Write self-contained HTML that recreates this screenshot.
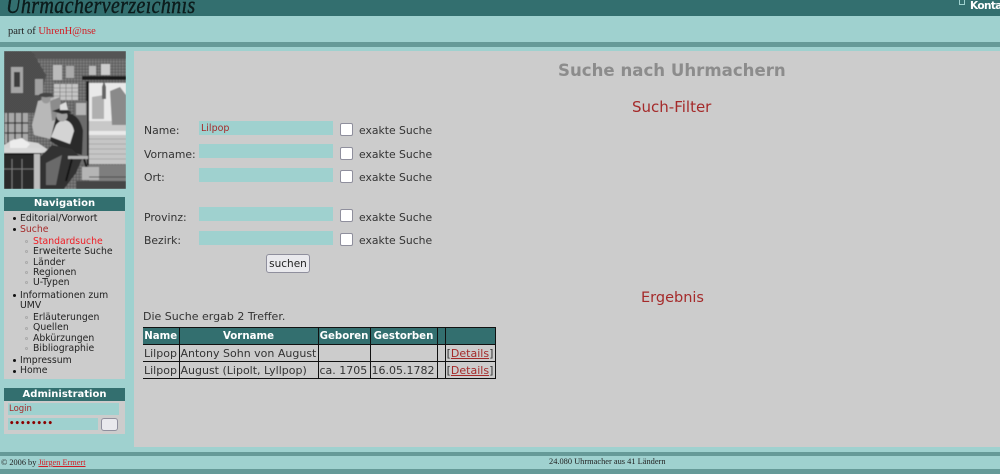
<!DOCTYPE html>
<html lang="de"><head><meta charset="utf-8"><title>Uhrmacherverzeichnis</title>
<style>
html,body{margin:0;padding:0;width:1000px;height:474px;overflow:hidden;background:#9fd1cf;}
body{position:relative;font-family:"DejaVu Sans",sans-serif;color:#333;}
.a{position:absolute;white-space:nowrap;}
.lb{font-size:10.8px;line-height:14px;color:#333;}
.inp{position:absolute;left:199px;width:134px;height:14px;background:#9fd1cf;}
.cb{position:absolute;left:340px;width:11px;height:11px;background:#fff;border:1px solid #8f8f9d;border-radius:2px;}
.nav{font-size:9.3px;line-height:11px;color:#222;}
.dot{position:absolute;width:3px;height:3px;border-radius:50%;background:#111;}
.cir{position:absolute;left:25px;width:3px;height:3px;border-radius:50%;border:.5px solid #aaa;box-sizing:border-box;}
table{border-collapse:collapse;position:absolute;left:143px;top:327px;font-size:11px;color:#333;table-layout:fixed;width:352px;}
td,th{padding:0 1px;height:16px;line-height:15px;white-space:nowrap;overflow:hidden;border-left:1px solid #111;border-right:1px solid #111;border-bottom:1px solid #111;}
tr:first-child th{border-top:1px solid #111;}
td:first-child,th:first-child{border-left:0;}
th{background:#336f6f;color:#fff;font-weight:bold;font-size:10.2px;text-align:center;height:16px;}
a{color:#a52a2a;}
</style></head><body>
<div class="a" style="left:0;top:0;width:1000px;height:16px;background:#336f6f;overflow:hidden;">
<div class="a" style="left:6px;top:-10px;font:italic 24px/32px 'Liberation Serif',serif;color:#0c1c1c;letter-spacing:.35px;-webkit-text-stroke:.4px #0c1c1c;transform:scaleX(.84);transform-origin:left top;">Uhrmacherverzeichnis</div>
<div class="a" style="left:959px;top:-1px;width:6px;height:6px;border:1px solid #9fd1cf;box-sizing:border-box;"></div>
<div class="a" style="left:970px;top:0;font:bold 10.5px/12px 'DejaVu Sans',sans-serif;color:#fff;letter-spacing:-.6px;">Konta</div>
</div>
<div class="a" style="left:8px;top:25px;font:10.5px/14px 'Liberation Serif',serif;color:#222;">part of <span style="color:#d41c24;">UhrenH@nse</span></div>
<div class="a" style="left:0;top:42px;width:1000px;height:5px;background:#669a98;"></div>
<div class="a" style="left:134px;top:51px;width:866px;height:396px;background:#cccccc;"></div>

<svg class="a" style="left:4px;top:51px;" width="122" height="138" viewBox="0 0 122 138">
<defs><pattern id="g" width="3" height="3" patternUnits="userSpaceOnUse"><rect width="3" height="3" fill="#7a7a7a"/><path d="M0 0H3M0 0V3" stroke="#3a3a3a" stroke-width=".8"/></pattern>
<pattern id="h" width="2" height="2" patternUnits="userSpaceOnUse"><rect width="2" height="2" fill="#666"/><path d="M0 0L2 2" stroke="#222" stroke-width=".7"/></pattern>
<filter id="b"><feGaussianBlur stdDeviation=".6"/></filter></defs>
<g filter="url(#b)">
<rect width="122" height="138" fill="url(#g)"/>
<rect x="0" y="0" width="122" height="8" fill="#555"/>
<path d="M0 0H28L42 24L34 62H0Z" fill="url(#h)"/>
<rect x="7" y="16" width="12" height="26" fill="#a5a5a5"/><rect x="10" y="21" width="6" height="15" fill="#3c3c3c"/>
<rect x="31" y="28" width="8" height="16" fill="#a0a0a0"/>
<rect x="49" y="14" width="9" height="15" fill="#bbb"/><rect x="62" y="15" width="8" height="12" fill="#aaa"/><rect x="85" y="15" width="7" height="9" fill="#bbb"/><rect x="97" y="13" width="9" height="11" fill="#ccc"/>
<rect x="78" y="25" width="44" height="4" fill="#1c1c1c"/>
<rect x="50" y="33" width="24" height="16" fill="#c4c4c4"/><path d="M50 37H74M50 41H74M50 45H74M56 33V49M62 33V49M68 33V49" stroke="#777" stroke-width=".6"/>
<rect x="82" y="30" width="3" height="84" fill="#1a1a1a"/>
<rect x="85" y="32" width="37" height="81" fill="#e9e9e9"/>
<path d="M85 70H122V80H85Z" fill="#c8c8c8"/><path d="M106 40L116 36L122 44V74H108Z" fill="#8a8a8a"/><path d="M88 46L100 44V68H88Z" fill="#b0b0b0"/><path d="M98 36l2 -6l2 6v12h-4z" fill="#666"/>
<path d="M85 84H122V113H85Z" fill="#c6c6c6"/><path d="M85 88H122M85 93H122M85 98H122M85 103H122M85 108H122" stroke="#a0a0a0" stroke-width=".7"/>
<rect x="70" y="50" width="13" height="64" fill="#6c6c6c"/><rect x="72" y="52" width="10" height="12" fill="#b5b5b5"/>
<rect x="1" y="62" width="23" height="30" fill="#a8a8a8"/><path d="M4 62V92M11 62V92M18 62V92M1 72H24M1 82H24" stroke="#333" stroke-width="1.3"/>
<path d="M34 50L50 46L56 68L46 88L30 84L28 74Z" fill="#b8b8b8"/><circle cx="42" cy="48" r="4.5" fill="#999"/><ellipse cx="42" cy="44" rx="7" ry="2.2" fill="#444"/>
<path d="M46 50L56 46L60 66L48 70Z" fill="#8c8c8c"/>
<path d="M52 66C62 58 76 62 79 80L78 104L62 100L46 90Z" fill="#2c2c2c"/>
<path d="M52 74C58 66 68 68 70 80L66 93L47 86Z" fill="#d4d4d4"/>
<circle cx="58" cy="65" r="5.5" fill="#a0a0a0"/><path d="M48 60L60 56L68 62L58 63Z" fill="#2a2a2a"/><path d="M56 54l6 -3l2 8l-8 0z" fill="#ddd"/>
<path d="M0 94L10 88L34 92L46 100L38 102H0Z" fill="#d4d4d4"/><path d="M6 90l12 -3l8 6l-6 7l-14 -2z" fill="#ececec"/>
<rect x="0" y="97" width="37" height="5" fill="#d8d8d8"/><rect x="0" y="102" width="37" height="2" fill="#1c1c1c"/>
<rect x="30" y="103" width="6" height="35" fill="#bdbdbd"/>
<rect x="0" y="104" width="30" height="34" fill="#2a2a2a"/><path d="M8 108V138M18 108V138M0 118H30" stroke="#888" stroke-width=".8"/>
<path d="M36 106L48 94L68 98L78 108L72 122L60 138H36Z" fill="#333"/><path d="M42 112L58 104L52 134H42Z" fill="#6a6a6a"/>
<rect x="64" y="105" width="20" height="3" fill="#b0b0b0"/><path d="M68 108L62 130M80 108L87 130" stroke="#151515" stroke-width="2"/>
<rect x="85" y="114" width="37" height="24" fill="#7e7e7e"/><rect x="78" y="116" width="17" height="13" fill="#b5b5b5"/><path d="M85 126H122M85 132H122" stroke="#3c3c3c" stroke-width=".7"/>
<rect x="72" y="130" width="50" height="8" fill="#444"/>
</g></svg>

<div class="a" style="left:4px;top:197px;width:121px;height:14px;background:#336f6f;color:#fff;font:bold 10px/14px 'DejaVu Sans',sans-serif;text-align:center;">Navigation</div>
<div class="a" style="left:4px;top:211px;width:121px;height:168px;background:#cccccc;"></div>
<div class="dot" style="left:13px;top:217px"></div><div class="a nav" style="left:20px;top:213px;">Editorial/Vorwort</div>
<div class="dot" style="left:13px;top:228px"></div><div class="a nav" style="left:20px;top:224px;color:#a52a2a;">Suche</div>
<div class="cir" style="top:240px"></div><div class="a nav" style="left:33px;top:236px;color:#f01c24;">Standardsuche</div>
<div class="cir" style="top:250px"></div><div class="a nav" style="left:33px;top:246px;">Erweiterte Suche</div>
<div class="cir" style="top:261px"></div><div class="a nav" style="left:33px;top:257px;">Länder</div>
<div class="cir" style="top:271px"></div><div class="a nav" style="left:33px;top:267px;">Regionen</div>
<div class="cir" style="top:281px"></div><div class="a nav" style="left:33px;top:277px;">U-Typen</div>
<div class="dot" style="left:13px;top:294px"></div><div class="a nav" style="left:20px;top:290px;">Informationen zum</div>
<div class="a nav" style="left:20px;top:300px;">UMV</div>
<div class="cir" style="top:316px"></div><div class="a nav" style="left:33px;top:312px;">Erläuterungen</div>
<div class="cir" style="top:327px"></div><div class="a nav" style="left:33px;top:322px;">Quellen</div>
<div class="cir" style="top:337px"></div><div class="a nav" style="left:33px;top:333px;">Abkürzungen</div>
<div class="cir" style="top:347px"></div><div class="a nav" style="left:33px;top:343px;">Bibliographie</div>
<div class="dot" style="left:13px;top:359px"></div><div class="a nav" style="left:20px;top:355px;">Impressum</div>
<div class="dot" style="left:13px;top:370px"></div><div class="a nav" style="left:20px;top:365px;">Home</div>

<div class="a" style="left:4px;top:388px;width:121px;height:13px;background:#336f6f;color:#fff;font:bold 10px/13px 'DejaVu Sans',sans-serif;text-align:center;">Administration</div>
<div class="a" style="left:4px;top:401px;width:121px;height:33px;background:#cccccc;"></div>
<div class="a" style="left:8px;top:403px;width:111px;height:12px;background:#9fd1cf;font-size:8.5px;line-height:12px;color:#a52a2a;text-indent:1px;">Login</div>
<div class="a" style="left:8px;top:418px;width:90px;height:12px;background:#9fd1cf;font:bold 8.6px/12px 'DejaVu Sans',sans-serif;color:#8b0000;text-indent:1px;">••••••••</div>
<div class="a" style="left:101px;top:418px;width:17px;height:13px;box-sizing:border-box;background:#e9e9ed;border:1px solid #8f8f9d;border-radius:3px;"></div>

<div class="a" style="left:558px;top:61px;font:bold 16.6px/20px 'DejaVu Sans',sans-serif;color:#8c8c8c;">Suche nach Uhrmachern</div>
<div class="a" style="left:632px;top:98px;font:15px/18px 'DejaVu Sans',sans-serif;color:#a52a2a;">Such-Filter</div>

<div class="a lb" style="left:144px;top:124px;">Name:</div>
<div class="a lb" style="left:144px;top:148px;">Vorname:</div>
<div class="a lb" style="left:144px;top:171px;">Ort:</div>
<div class="a lb" style="left:144px;top:211px;">Provinz:</div>
<div class="a lb" style="left:144px;top:234px;">Bezirk:</div>
<div class="inp" style="top:121px;font:9.5px/15px 'DejaVu Sans',sans-serif;color:#a52a2a;text-indent:2px;">Lilpop</div>
<div class="inp" style="top:144px;"></div>
<div class="inp" style="top:168px;"></div>
<div class="inp" style="top:207px;"></div>
<div class="inp" style="top:231px;"></div>
<div class="cb" style="top:123px;"></div><div class="a lb" style="left:359px;top:124px;">exakte Suche</div>
<div class="cb" style="top:147px;"></div><div class="a lb" style="left:359px;top:148px;">exakte Suche</div>
<div class="cb" style="top:170px;"></div><div class="a lb" style="left:359px;top:171px;">exakte Suche</div>
<div class="cb" style="top:209px;"></div><div class="a lb" style="left:359px;top:211px;">exakte Suche</div>
<div class="cb" style="top:233px;"></div><div class="a lb" style="left:359px;top:234px;">exakte Suche</div>
<div class="a" style="left:266px;top:254px;width:44px;height:19px;box-sizing:border-box;background:#e9e9ed;border:1px solid #8f8f9d;border-radius:3px;font:10.5px/18px 'DejaVu Sans',sans-serif;color:#222;text-align:center;">suchen</div>

<div class="a" style="left:641px;top:289px;font:14.5px/18px 'DejaVu Sans',sans-serif;color:#a52a2a;">Ergebnis</div>
<div class="a lb" style="left:143px;top:310px;font-size:11px;">Die Suche ergab 2 Treffer.</div>

<table>
<colgroup><col style="width:36px"><col style="width:139px"><col style="width:52px"><col style="width:67px"><col style="width:8px"><col style="width:50px"></colgroup>
<tr><th>Name</th><th>Vorname</th><th>Geboren</th><th>Gestorben</th><th></th><th></th></tr>
<tr><td>Lilpop</td><td>Antony Sohn von August</td><td></td><td></td><td></td><td style="text-align:center">[<a href="#">Details</a>]</td></tr>
<tr><td>Lilpop</td><td>August (Lipolt, Lyllpop)</td><td>ca. 1705</td><td>16.05.1782</td><td></td><td style="text-align:center">[<a href="#">Details</a>]</td></tr>
</table>

<div class="a" style="left:0;top:452px;width:1000px;height:4px;background:#669a98;"></div>
<div class="a" style="left:1px;top:457px;font:8.3px/11px 'Liberation Serif',serif;color:#222;">© 2006 by <a href="#" style="color:#d41c24;">Jürgen Ermert</a></div>
<div class="a" style="left:549px;top:456px;font:8.4px/12px 'Liberation Serif',serif;color:#222;">24.080 Uhrmacher aus 41 Ländern</div>
<div class="a" style="left:0;top:469px;width:1000px;height:5px;background:#669a98;"></div>
</body></html>
